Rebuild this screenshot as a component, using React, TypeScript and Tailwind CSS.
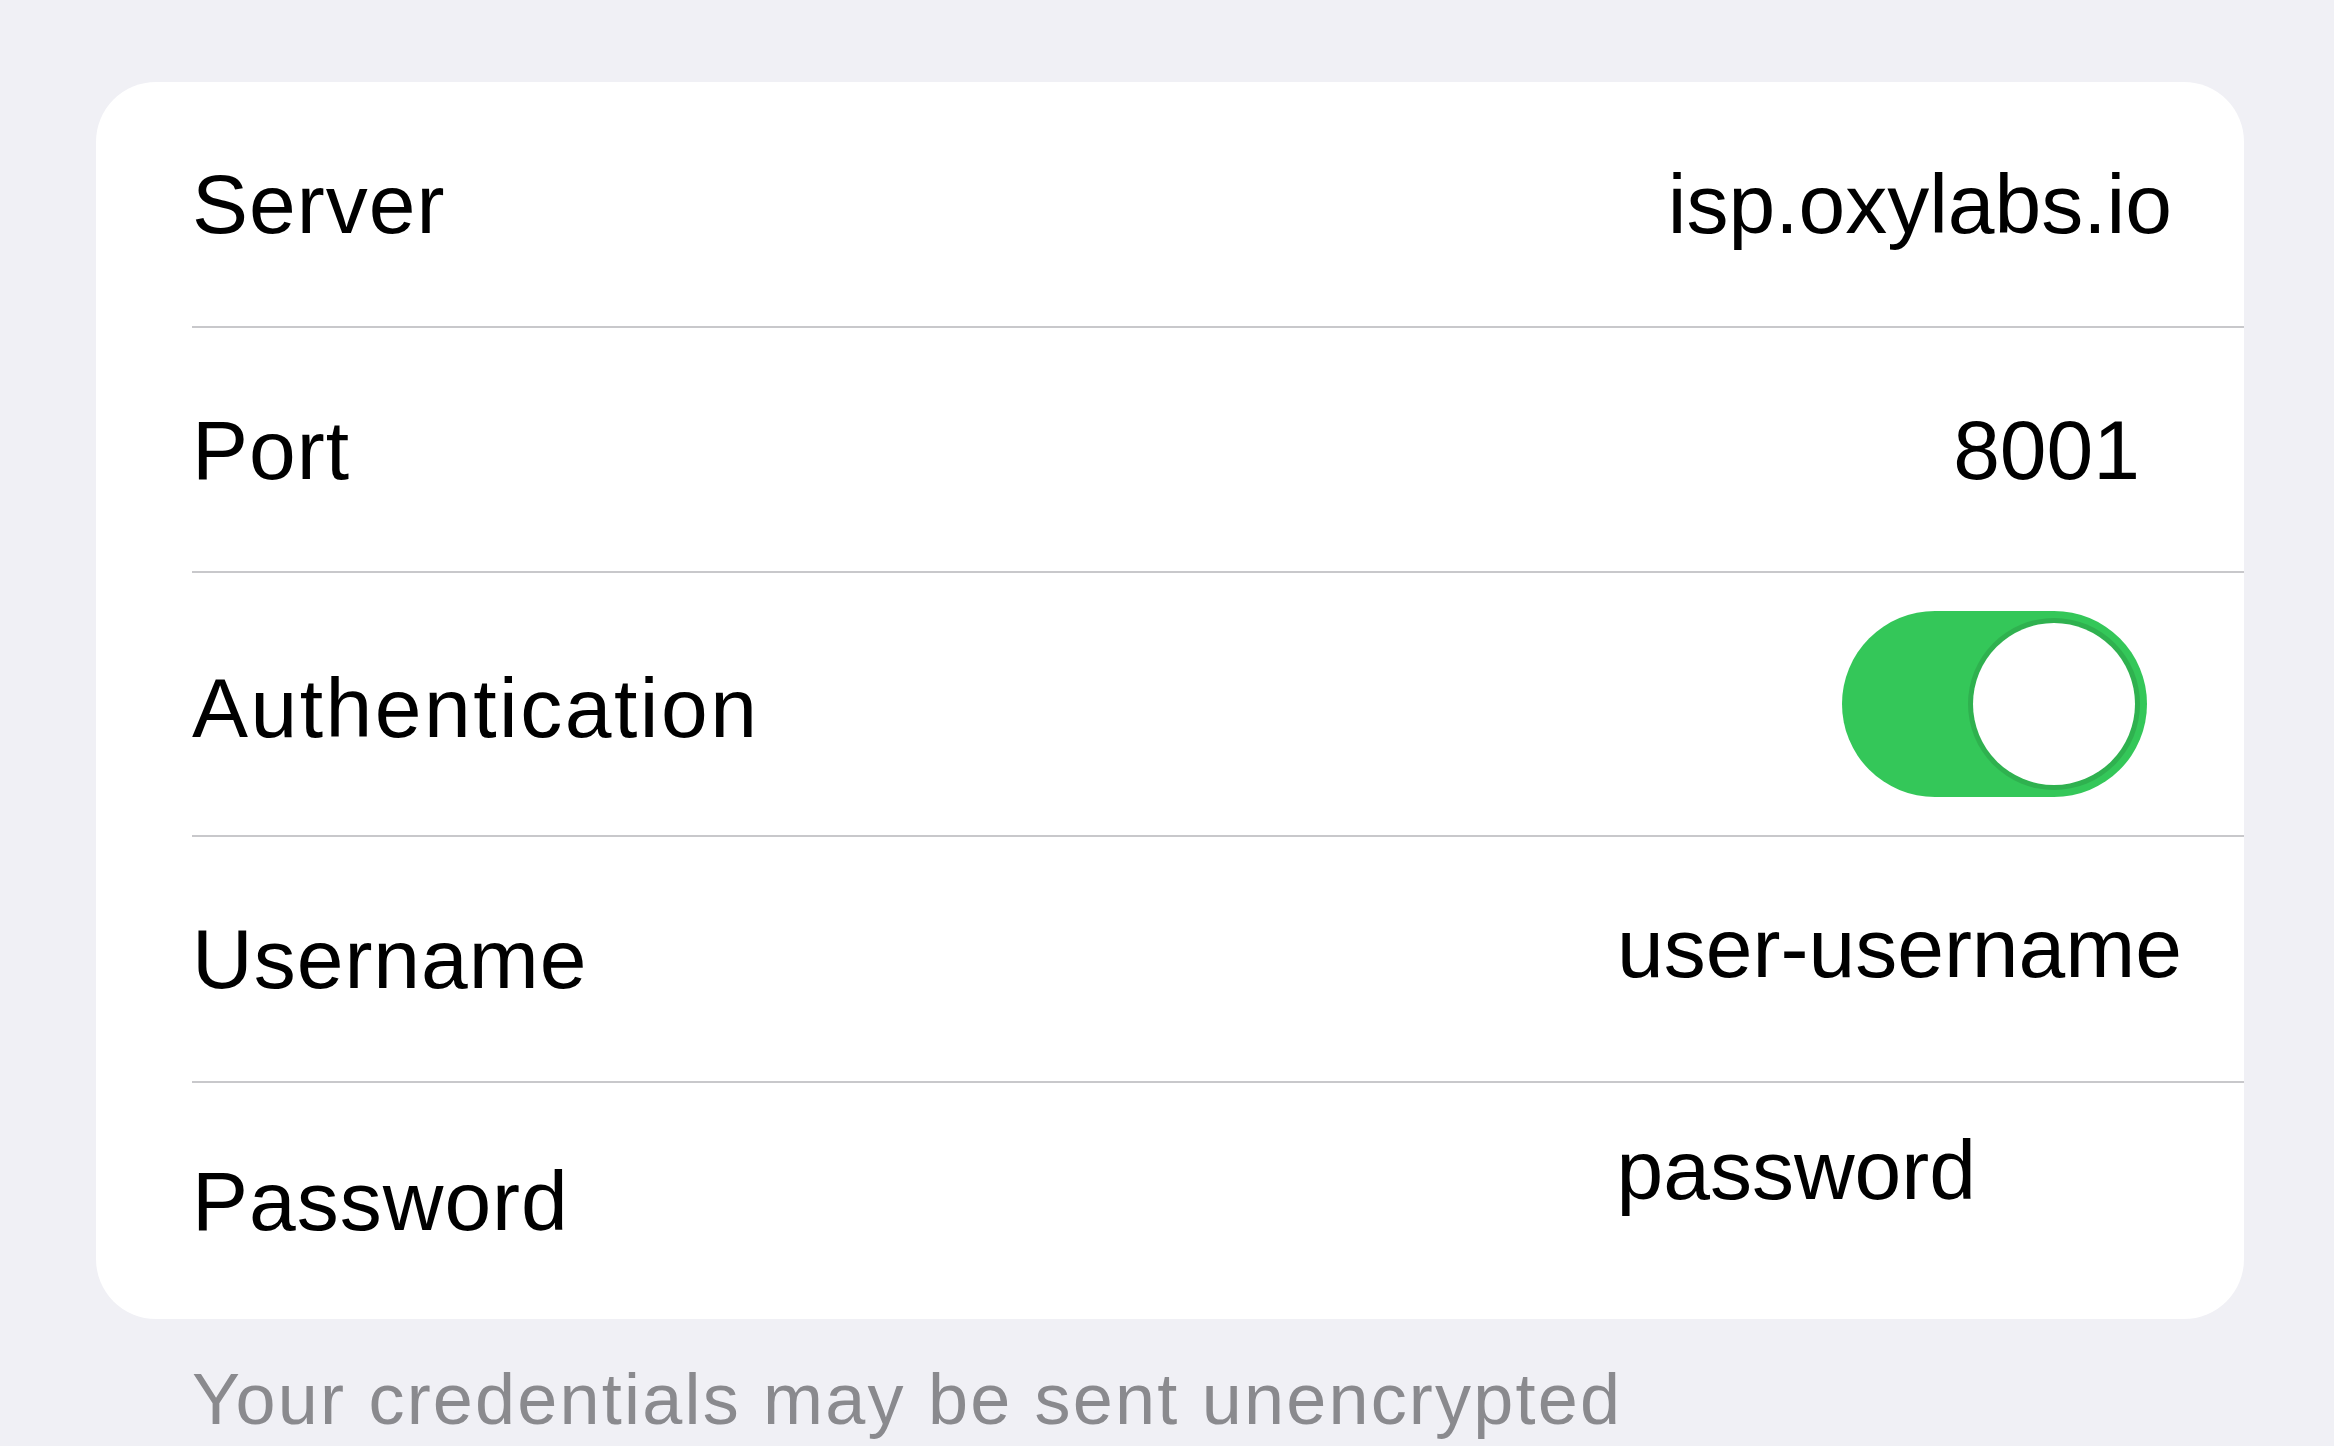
import React, { useState } from "react";

interface RowProps {
  label: string;
  height: string;
  children?: React.ReactNode;
  labelClass?: string;
}

const Row: React.FC<RowProps> = ({ label, height, children, labelClass }) => {
  return (
    <div className={`flex items-center justify-between pl-[96px] ${height}`}>
      <span className={`text-[84px] leading-[94px] text-black ${labelClass ?? "tracking-[1px]"}`}>
        {label}
      </span>
      {children}
    </div>
  );
};

const Divider = () => <div className="ml-[96px] h-[2px] bg-[#c8c8cb]" />;

const Toggle: React.FC<{ on: boolean; onChange: () => void }> = ({ on, onChange }) => {
  return (
    <button
      onClick={onChange}
      className={`mr-[97px] flex h-[186px] w-[305px] items-center overflow-hidden rounded-full p-[12px] ${
        on ? "justify-end bg-[#34c759]" : "justify-start bg-[#e5e5ea]"
      }`}
    >
      <span className="block h-[162px] w-[162px] rounded-full bg-white shadow-[0_0_0_5px_#2fb14f]" />
    </button>
  );
};

export default function App() {
  const [auth, setAuth] = useState(true);

  return (
    <div
      className="min-h-screen w-full bg-[#f0f0f5] pl-[96px] pt-[82px]"
      style={{ fontFamily: '"Liberation Sans", Arial, sans-serif' }}
    >
      <div className="w-[2148px] overflow-hidden rounded-[60px] bg-white">
        <Row label="Server" height="h-[244px]">
          <span className="pr-[72px] text-[84px] leading-[94px] text-black">isp.oxylabs.io</span>
        </Row>
        <Divider />
        <Row label="Port" height="h-[243px]">
          <span className="pr-[104px] text-[84px] leading-[94px] text-black">8001</span>
        </Row>
        <Divider />
        <Row label="Authentication" height="h-[262px]" labelClass="mt-[8px] tracking-[2.5px]">
          <Toggle on={auth} onChange={() => setAuth((v) => !v)} />
        </Row>
        <Divider />
        <Row label="Username" height="h-[244px]">
          <span className="mb-[22px] pr-[62px] text-[84px] leading-[94px] text-black">
            user-username
          </span>
        </Row>
        <Divider />
        <Row label="Password" height="h-[236px]">
          <span className="mb-[62px] pr-[268px] text-[84px] leading-[94px] text-black">
            password
          </span>
        </Row>
      </div>
      <p className="mt-[44px] pl-[96px] text-[72px] leading-[72px] tracking-[2.2px] text-[#8a8a8e]">
        Your credentials may be sent unencrypted
      </p>
    </div>
  );
}
